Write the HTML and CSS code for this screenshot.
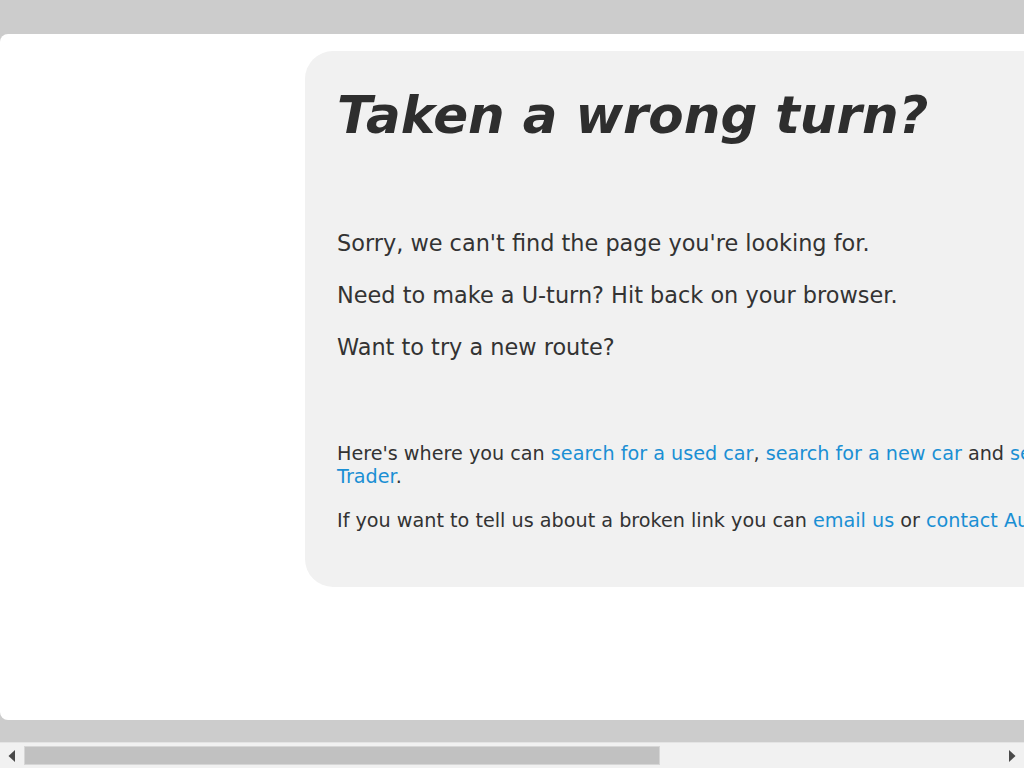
FILE: index.html
```html
<!DOCTYPE html>
<html lang="en">
<head>
<meta charset="utf-8">
<title>Page not found</title>
<link rel="stylesheet" href="styles.css">
</head>
<body>
<div class="viewport">
  <div class="page">
    <main class="card">
      <h1 class="title">Taken a wrong turn?</h1>
      <div class="intro">
        <p>Sorry, we can't find the page you're looking for.</p>
        <p>Need to make a U-turn? Hit back on your browser.</p>
        <p>Want to try a new route?</p>
      </div>
      <div class="links">
        <p>Here's where you can <a href="#">search for a used car</a>, <a href="#">search for a new car</a> and <a href="#">sell your car with Auto Trader</a>.</p>
        <p>If you want to tell us about a broken link you can <a href="#">email us</a> or <a href="#">contact Auto Trader</a>.</p>
      </div>
    </main>
  </div>
</div>
<div class="scrollbar" aria-hidden="true">
  <div class="sb-btn">
    <svg width="8" height="12" viewBox="0 0 8 12"><path d="M7 0 L0.5 6 L7 12 Z" fill="#4a4a4a"/></svg>
  </div>
  <div class="sb-track">
    <div class="sb-thumb"></div>
  </div>
  <div class="sb-btn">
    <svg width="8" height="12" viewBox="0 0 8 12"><path d="M1 0 L7.5 6 L1 12 Z" fill="#4a4a4a"/></svg>
  </div>
</div>
</body>
</html>
```
FILE: styles.css
```css
html {
  background: #cccccc;
}
body {
  margin: 0;
  height: 768px;
  overflow: hidden;
  display: flex;
  flex-direction: column;
  font-family: "DejaVu Sans", sans-serif;
  color: #333333;
}
.viewport {
  height: 742px;
  padding-top: 34px;
  box-sizing: border-box;
  overflow: hidden;
}
.page {
  width: 1560px;
  height: 686px;
  box-sizing: border-box;
  background: #ffffff;
  border-radius: 8px;
  padding: 17px 0 0 305px;
}
.card {
  width: 920px;
  background: #f1f1f1;
  border-radius: 28px;
  padding: 29px 32px 55px;
}
.title {
  margin: 0;
  font-size: 51.5px;
  font-weight: bold;
  font-style: italic;
  line-height: 70px;
  color: #2e2e2e;
}
.intro {
  margin-top: 78px;
  font-size: 22.4px;
  line-height: 30px;
}
.intro p {
  margin: 0 0 22px;
}
.intro p:last-child {
  margin-bottom: 0;
}
.links {
  margin-top: 80px;
  font-size: 19.2px;
  line-height: 23px;
}
.links p {
  margin: 0 0 21px;
}
.links p:last-child {
  margin-bottom: 0;
}
a {
  color: #1a8fd4;
  text-decoration: none;
}
.scrollbar {
  height: 26px;
  display: flex;
  background: #f1f1f1;
  border-top: 1px solid #e4e4e4;
  box-sizing: border-box;
}
.sb-btn {
  width: 24px;
  display: flex;
  align-items: center;
  justify-content: center;
}
.sb-track {
  flex: 1;
  display: flex;
  align-items: center;
}
.sb-thumb {
  width: 636px;
  height: 19px;
  background: #c1c1c1;
  border: 1px solid #d6d6d6;
  box-sizing: border-box;
}
```
